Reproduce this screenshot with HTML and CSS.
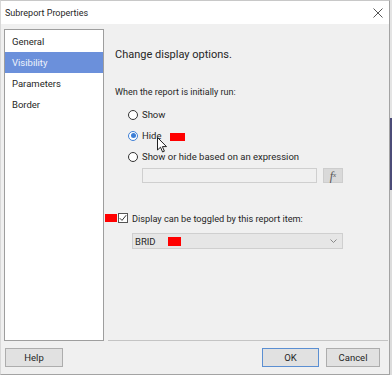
FILE: index.html
```html
<!DOCTYPE html>
<html lang="en">
<head>
  <meta charset="UTF-8" />
  <title>Subreport Properties</title>
  <link rel="stylesheet" href="styles.css">
</head>
<body>
  <div class="dialog">
    <div class="titlebar">
      <span class="title">Subreport Properties</span>
      <svg class="close" width="10" height="10" viewBox="0 0 10 10">
        <path d="M0.5 0.5 L9.5 9.5 M9.5 0.5 L0.5 9.5" stroke="#555" stroke-width="1"/>
      </svg>
    </div>

    <div class="main">
      <ul class="nav">
        <li>General</li>
        <li class="selected">Visibility</li>
        <li>Parameters</li>
        <li>Border</li>
      </ul>

      <div class="panel">
        <div class="heading">Change display options.</div>
        <div class="label">When the report is initially run:</div>

        <div class="radios">
          <div class="radio-row">
            <span class="radio"></span>
            <span>Show</span>
          </div>
          <div class="radio-row">
            <span class="radio checked"></span>
            <span>Hide</span>
            <span class="redact redact-hide"></span>
          </div>
          <div class="radio-row">
            <span class="radio"></span>
            <span>Show or hide based on an expression</span>
          </div>
          <div class="expr-row">
            <div class="expr-box"></div>
            <div class="fx-btn"><i>f</i><sub>x</sub></div>
          </div>
        </div>

        <div class="check-row">
          <span class="redact redact-check"></span>
          <span class="checkbox">
            <svg width="8" height="8" viewBox="0 0 8 8"><path d="M0.8 4.2 L3 6.4 L7.2 1.2" fill="none" stroke="#333" stroke-width="1"/></svg>
          </span>
          <span>Display can be toggled by this report item:</span>
        </div>

        <div class="select">
          <span>BRID</span>
          <span class="redact redact-select"></span>
          <svg class="chevron" width="7" height="4" viewBox="0 0 7 4"><path d="M0.5 0.5 L3.5 3.5 L6.5 0.5" fill="none" stroke="#888" stroke-width="1"/></svg>
        </div>

        <svg class="cursor" width="11" height="17" viewBox="0 0 11 17">
          <path d="M0.5 0.5 L0.5 13 L3.5 10.2 L5.6 15 L7.4 14.2 L5.4 9.6 L9.5 9.6 Z" fill="#fff" stroke="#222" stroke-width="1"/>
        </svg>
      </div>
    </div>

    <div class="footer">
      <button class="btn btn-help">Help</button>
      <div class="spacer"></div>
      <button class="btn btn-ok">OK</button>
      <button class="btn btn-cancel">Cancel</button>
    </div>
  </div>
</body>
</html>
```

FILE: styles.css
```css
* { margin: 0; padding: 0; box-sizing: border-box; }
body, html {
  width: 392px;
  height: 375px;
  overflow: hidden;
  font-family: Roboto, 'Open Sans', sans-serif;
  color: #262626;
  background: linear-gradient(#e4e4e4 0, #e4e4e4 118px, #4c4c78 118px, #4c4c78 190px, #dcdcdc 190px, #dcdcdc 100%);
}
.dialog {
  width: 390px;
  height: 375px;
  background-color: #f0f0f0;
  border: 1px solid #a3a3a3;
  border-top-color: #c8c8c8;
  border-left-color: #d8d8d8;
  display: flex;
  flex-direction: column;
  position: relative;
}
.titlebar {
  height: 23px;
  background-color: #fff;
  display: flex;
  align-items: center;
  justify-content: space-between;
  padding: 0 6px 0 4px;
  flex-shrink: 0;
}
.title {
  font-size: 9px;
  color: #262626;
}
.close { margin-top: 1px; }

.main {
  display: flex;
  padding: 5px 0 0 3px;
  height: 317px;
  flex-shrink: 0;
}
.nav {
  list-style: none;
  width: 100px;
  height: 312px;
  background: #fff;
  border: 1px solid #9e9e9e;
  padding-top: 1px;
}
.nav li {
  height: 21px;
  line-height: 21px;
  padding-left: 7px;
  font-size: 9.5px;
  color: #262626;
}
.nav li.selected {
  background-color: #6b90db;
  color: #eef3fc;
}

.panel {
  flex: 1;
  margin-left: 4px;
  margin-right: 1px;
  border-bottom: 1px solid #c4c4c4;
  padding: 18px 0 0 7px;
  position: relative;
  font-size: 9.5px;
}
.heading {
  font-size: 11px;
  line-height: 16px;
  color: #262626;
}
.label {
  margin-top: 22px;
  line-height: 14px;
  font-size: 9px;
}
.radios {
  margin-top: 5px;
  padding-left: 13px;
}
.radio-row {
  display: flex;
  align-items: center;
  gap: 4px;
  height: 21px;
}
.radio {
  width: 10px;
  height: 10px;
  border: 1px solid #333;
  border-radius: 50%;
  background: #fff;
  position: relative;
}
.radio.checked {
  border-color: #3d7fd6;
}
.radio.checked::after {
  content: '';
  position: absolute;
  left: 1.5px;
  top: 1.5px;
  width: 5px;
  height: 5px;
  border-radius: 50%;
  background: #3d7fd6;
}
.expr-row {
  display: flex;
  gap: 6px;
  margin: 1px 0 0 14px;
}
.expr-box {
  width: 175px;
  height: 15px;
  background: #f0f0f0;
  border: 1px solid #cfcfcf;
}
.fx-btn {
  width: 20px;
  height: 15px;
  background: #d9d9d9;
  border: 1px solid #cdcdcd;
  font-family: 'Liberation Serif', serif;
  font-size: 12px;
  color: #555;
  display: flex;
  align-items: center;
  justify-content: center;
  line-height: 1;
}
.fx-btn sub { font-size: 7px; font-style: italic; }

.redact {
  display: inline-block;
  background: #ff0000;
}
.redact-hide {
  width: 15px;
  height: 8px;
  margin-left: 5px;
  margin-top: 2px;
}
.check-row {
  display: flex;
  align-items: center;
  height: 16px;
  margin: 27px 0 0 -10px;
  font-size: 9.2px;
}
.redact-check {
  width: 12px;
  height: 8px;
}
.checkbox {
  width: 10px;
  height: 10px;
  border: 1px solid #555;
  background: #fff;
  margin: 0 4px 0 1px;
  display: flex;
  align-items: center;
  justify-content: center;
}
.select {
  margin: 7px 0 0 17px;
  width: 211px;
  height: 16px;
  background: #e6e6e6;
  border: 1px solid #cfcfcf;
  display: flex;
  align-items: center;
  padding: 0 5px 0 2px;
  font-size: 9.5px;
}
.redact-select {
  width: 13px;
  height: 9px;
  margin-left: 12px;
}
.chevron { margin-left: auto; }
.cursor {
  position: absolute;
  left: 49px;
  top: 108px;
}

.footer {
  display: flex;
  align-items: flex-start;
  padding: 7px 9px 0 4px;
  gap: 7px;
}
.spacer { flex: 1; }
.btn {
  height: 19px;
  background: #e1e1e1;
  border: 1px solid #adadad;
  font-family: Roboto, 'Open Sans', sans-serif;
  font-size: 9.5px;
  color: #262626;
}
.btn-help { width: 58px; }
.btn-ok { width: 57px; border-color: #5b8fd2; }
.btn-cancel { width: 54px; }
```
